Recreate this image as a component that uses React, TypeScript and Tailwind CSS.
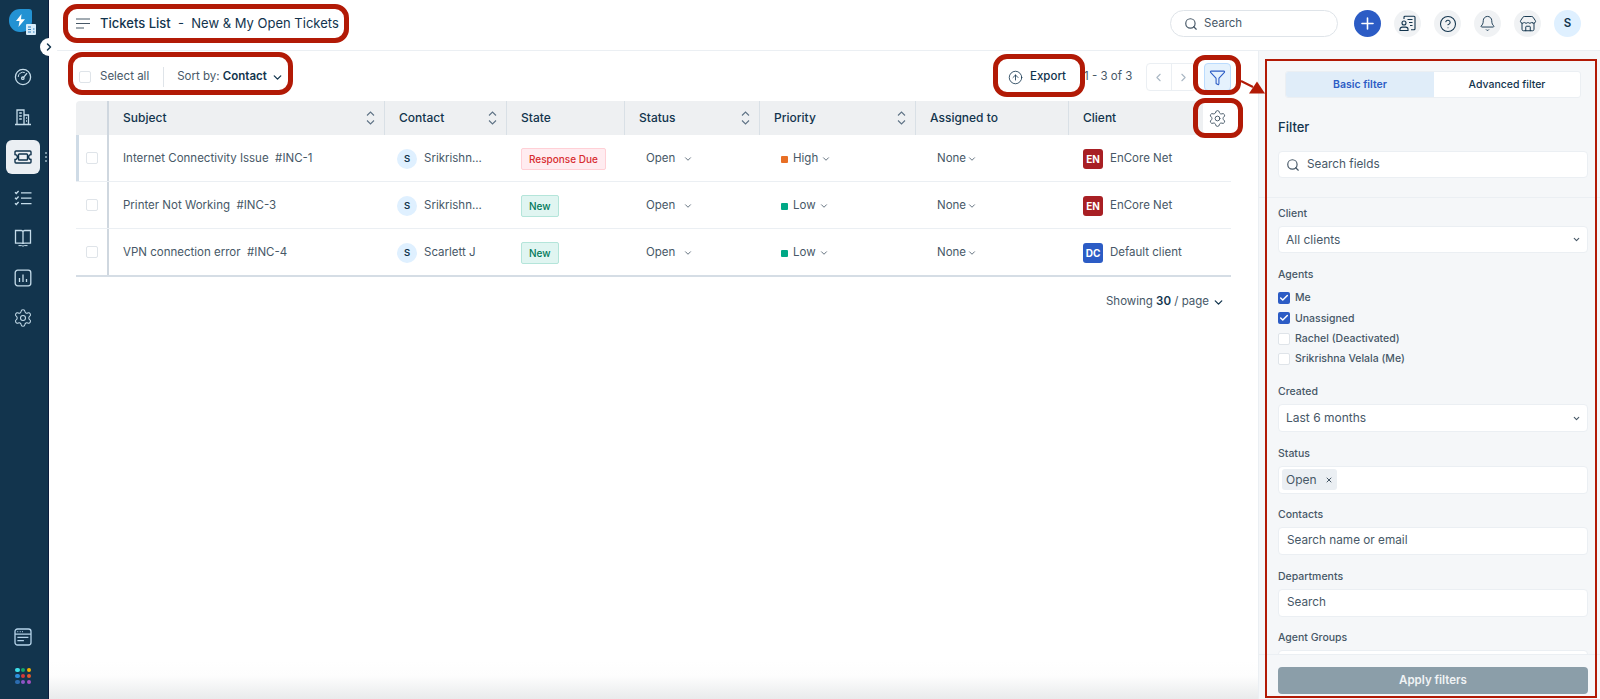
import React from "react";
import {
  Bell,
  Check,
  ChevronDown,
  ChevronLeft,
  ChevronRight,
  CircleArrowUp,
  CircleHelp,
  Funnel,
  Plus,
  Search,
  Settings,
  Store,
  X,
} from "lucide-react";

const gridCols = "grid grid-cols-[33px_276px_122px_118px_135px_156px_153px_162px]";

function GaugeIcon() {
  return (
    <svg width="18" height="18" viewBox="0 0 18 18" fill="none" stroke="currentColor" strokeWidth="1.3">
      <circle cx="9" cy="9" r="7.6" />
      <path d="M4.2 9a4.8 4.8 0 0 1 6.6-4.4" strokeWidth="1" />
      <path d="M9.4 9.6L13 5.2" />
      <circle cx="8.8" cy="10.2" r="1.2" />
    </svg>
  );
}

function BuildingIcon() {
  return (
    <svg width="18" height="18" viewBox="0 0 18 18" fill="none" stroke="currentColor" strokeWidth="1.3">
      <path d="M1 16.5h16M3 16.5V2h7v14.5M10 7h4.5v9.5M5.2 5h2.6M5.2 8h2.6M5.2 11h2.6M12 10h1M12 13h1" />
    </svg>
  );
}

function TicketIcon() {
  return (
    <svg width="18" height="14" viewBox="0 0 18 14" fill="none" stroke="#12344d" strokeWidth="1.4">
      <path d="M2 1h14a1 1 0 0 1 1 1v2.6a2.4 2.4 0 0 0 0 4.8V12a1 1 0 0 1-1 1H2a1 1 0 0 1-1-1V9.4a2.4 2.4 0 0 0 0-4.8V2a1 1 0 0 1 1-1z" />
      <rect x="4.5" y="4" width="9" height="6" rx="0.8" />
    </svg>
  );
}

function TasksIcon() {
  return (
    <svg width="18" height="16" viewBox="0 0 18 16" fill="none" stroke="currentColor" strokeWidth="1.3">
      <path d="M1 2.2l1.3 1.3L4.6 1M1 7.7l1.3 1.3 2.3-2.5M1 13.2l1.3 1.3 2.3-2.5" />
      <path d="M7 2.8h10.5M7 8.2h10.5M7 13.6h10.5" />
    </svg>
  );
}

function BookIcon() {
  return (
    <svg width="18" height="18" viewBox="0 0 18 18" fill="none" stroke="currentColor" strokeWidth="1.3">
      <path d="M9 3.2v11.3M9 3.2A1.7 1.7 0 0 0 7.3 1.5H1.5v12.6h5.8c.9 0 1.7.4 1.7 1 0-.6.8-1 1.7-1h5.8V1.5h-5.8A1.7 1.7 0 0 0 9 3.2z" />
      <path d="M4.5 16.6h3.2l1.3.6 1.3-.6h3.2" strokeWidth="1" />
    </svg>
  );
}

function ReportIcon() {
  return (
    <svg width="18" height="18" viewBox="0 0 18 18" fill="none" stroke="currentColor" strokeWidth="1.3">
      <rect x="1.2" y="1.2" width="15.6" height="15.6" rx="2.5" />
      <path d="M5.5 13V9M9 13V5.5M12.5 13v-3" />
    </svg>
  );
}

function ConsoleIcon() {
  return (
    <svg width="18" height="18" viewBox="0 0 18 18" fill="none" stroke="#b5d3ea" strokeWidth="1.3">
      <rect x="1" y="1" width="16" height="16" rx="2.5" />
      <path d="M1 6.2h16M3.4 3.6h.8M5.8 3.6h.8M8.2 3.6h.8M3.4 9.4h11M3.4 12.6h6.5" />
    </svg>
  );
}

function AppDots() {
  const colors = ["#3fe0ea", "#16a56b", "#f2b200", "#2f8fdc", "#d23a3a", "#e2572b", "#2c6cb0", "#8c55c5", "#a74fc0"];
  return (
    <div className="grid grid-cols-3 gap-[1.5px] w-[16px]">
      {colors.map((c) => (
        <span key={c} className="w-[4.5px] h-[4.5px] rounded-full" style={{ backgroundColor: c }} />
      ))}
    </div>
  );
}

function SortArrows() {
  return (
    <svg width="9" height="14" viewBox="0 0 9 14" fill="none" stroke="#5f7386" strokeWidth="1.1" className="shrink-0">
      <path d="M1 4.5L4.5 1 8 4.5M1 9.5L4.5 13 8 9.5" />
    </svg>
  );
}

function ContactCardIcon() {
  return (
    <svg width="17" height="17" viewBox="0 0 17 17" fill="none" stroke="#12344d" strokeWidth="1.1">
      <path d="M5 4V2.2a1 1 0 0 1 1-1h9a1 1 0 0 1 1 1v11.6a1 1 0 0 1-1 1h-3" />
      <path d="M8.5 4.5h5M10 7.5h3.5M11 10.5h2.5" />
      <circle cx="5" cy="8" r="2" />
      <path d="M1 15.5v-1.2a2.2 2.2 0 0 1 2.2-2.2h3.6a2.2 2.2 0 0 1 2.2 2.2v1.2z" />
    </svg>
  );
}

function HeaderCell({ label, sort, last }: { label: string; sort?: boolean; last?: boolean }) {
  return (
    <div className={`flex items-center justify-between pl-[14px] pr-[9px] h-full ${last ? "" : "border-r border-[#d9e0e6]"}`}>
      <span className="text-[12px] font-medium text-[#12344d]">{label}</span>
      {sort && <SortArrows />}
    </div>
  );
}

function Field({ label, children }: { label: string; children: React.ReactNode }) {
  return (
    <div className="flex flex-col">
      <div className="text-[10.5px] leading-[14px] font-medium text-[#475867] mb-[5px]">{label}</div>
      {children}
    </div>
  );
}

function InputBox({ children, h }: { children: React.ReactNode; h: string }) {
  return (
    <div className={`flex items-center justify-between bg-white border border-[#ebeff3] rounded-[4px] ${h}`}>
      {children}
    </div>
  );
}

function AgentCheck({ label, on }: { label: string; on?: boolean }) {
  return (
    <div className="flex items-center gap-[5px] h-[20.3px]">
      {on ? (
        <span className="w-[12px] h-[12px] rounded-[2px] bg-[#2c5cc5] flex items-center justify-center">
          <Check className="w-[10px] h-[10px] text-white" strokeWidth={3.5} />
        </span>
      ) : (
        <span className="w-[12px] h-[12px] rounded-[2px] bg-white border border-[#dfe4e9]" />
      )}
      <span className="text-[10.5px] font-medium text-[#475867]">{label}</span>
    </div>
  );
}

const rows = [
  { subject: "Internet Connectivity Issue", id: "#INC-1", contact: "Srikrishn...", state: "due", priority: "High", client: "EnCore Net", code: "EN" },
  { subject: "Printer Not Working", id: "#INC-3", contact: "Srikrishn...", state: "new", priority: "Low", client: "EnCore Net", code: "EN" },
  { subject: "VPN connection error", id: "#INC-4", contact: "Scarlett J", state: "new", priority: "Low", client: "Default client", code: "DC" },
];

function TicketRow({ row, first }: { row: (typeof rows)[number]; first: boolean }) {
  const small = "text-[11.5px] text-[#475867]";
  return (
    <div className={`${gridCols} h-[47px] items-center border-b border-[#ebeff3] [&>*:not(:first-child)]:pt-[2px]`}>
      <div className="relative h-full border-r-2 border-[#cfd7df] flex items-center pl-[10px]">
        {first && <span className="absolute left-0 top-0 bottom-0 w-[3px] bg-[#cfdbe6]" />}
        <span className="w-[12px] h-[12px] border border-[#dfe4e9] rounded-[2px] bg-white" />
      </div>
      <div className="pl-[14px] text-[11.5px] text-[#475867] whitespace-pre">
        {row.subject}
        {"  "}
        {row.id}
      </div>
      <div className="pl-[12px] flex items-center gap-[7px]">
        <span className="w-[20px] h-[20px] rounded-full bg-[#dff0ff] text-[9.5px] font-semibold text-[#12344d] flex items-center justify-center">S</span>
        <span className={small}>{row.contact}</span>
      </div>
      <div className="pl-[14px] flex items-center">
        {row.state === "due" ? (
          <span className="flex items-center h-[22px] px-[7px] rounded-[2px] bg-[#ffecf0] border border-[#ffd0d6] text-[10px] font-medium text-[#d72d30]">Response Due</span>
        ) : (
          <span className="flex items-center h-[22px] px-[7px] rounded-[2px] bg-[#e0f5f1] border border-[#b4e5da] text-[10px] font-medium text-[#00795b]">New</span>
        )}
      </div>
      <div className="pl-[21px] flex items-center gap-[8px]">
        <span className={small}>Open</span>
        <ChevronDown className="w-[10px] h-[10px] text-[#475867]" />
      </div>
      <div className="pl-[21px] flex items-center">
        <span className={`w-[7px] h-[7px] rounded-[1px] mr-[5px] ${row.priority === "High" ? "bg-[#e86f25]" : "bg-[#00a886]"}`} />
        <span className={small}>{row.priority}</span>
        <ChevronDown className="w-[10px] h-[10px] text-[#475867] ml-[3px]" />
      </div>
      <div className="pl-[21px] flex items-center gap-[1px]">
        <span className={small}>None</span>
        <ChevronDown className="w-[10px] h-[10px] text-[#475867]" />
      </div>
      <div className="pl-[14px] flex items-center gap-[7px]">
        <span className={`w-[20px] h-[20px] rounded-[3px] text-[10px] font-bold text-white flex items-center justify-center ${row.code === "EN" ? "bg-[#a81f24]" : "bg-[#2c5cc5]"}`}>{row.code}</span>
        <span className={small}>{row.client}</span>
      </div>
    </div>
  );
}

function Sidebar() {
  return (
    <aside className="w-[49px] shrink-0 bg-[#12344d] border-r border-[#0c1d3d] flex flex-col items-center pr-[2px] pb-[15px] text-[#c5dcea] relative z-10">
      <div className="relative mt-[9px] -ml-[5px] w-[23px] h-[23px] rounded-[11px] rounded-tr-[3px] bg-[#2392d3] flex items-center justify-center">
        <svg width="11" height="13" viewBox="0 0 11 13" fill="#ffffff">
          <path d="M6.5 0L1 7h3.5L3.5 13 10 5.2H6z" />
        </svg>
        <svg width="10" height="11" viewBox="0 0 10 11" className="absolute -right-[4px] -bottom-[3px]">
          <rect width="10" height="11" rx="1" fill="#d8ecfa" />
          <path d="M2 3h3M2 5.5h3M2 8h3M7 5h1.5M7 8h1.5" stroke="#2c7fbd" strokeWidth="1" />
        </svg>
      </div>
      <span className="absolute left-[40px] top-[38px] w-[18px] h-[18px] rounded-full bg-white flex items-center justify-center">
        <ChevronRight className="w-[12px] h-[12px] text-[#12344d]" strokeWidth={3} />
      </span>
      <div className="mt-[36px] flex flex-col items-center">
        <div className="h-[18px] flex items-center"><GaugeIcon /></div>
        <div className="h-[18px] mt-[22px] flex items-center"><BuildingIcon /></div>
        <div className="relative w-[34px] h-[34px] mt-[14px] rounded-[6px] bg-[#ebeff3] flex items-center justify-center">
          <TicketIcon />
          <span className="absolute -right-[7px] top-[12px] flex flex-col gap-[2px]">
            <span className="w-[2px] h-[2px] bg-[#9fb6c6] rounded-full" />
            <span className="w-[2px] h-[2px] bg-[#9fb6c6] rounded-full" />
            <span className="w-[2px] h-[2px] bg-[#9fb6c6] rounded-full" />
          </span>
        </div>
        <div className="h-[18px] mt-[15px] flex items-center"><TasksIcon /></div>
        <div className="h-[18px] mt-[22px] flex items-center"><BookIcon /></div>
        <div className="h-[18px] mt-[22px] flex items-center"><ReportIcon /></div>
        <div className="h-[18px] mt-[22px] flex items-center"><Settings className="w-[20px] h-[20px]" strokeWidth={1.25} /></div>
      </div>
      <div className="mt-auto flex flex-col items-center gap-[22px]">
        <ConsoleIcon />
        <AppDots />
      </div>
    </aside>
  );
}

function TopBar() {
  const iconBtn = "w-[27px] h-[27px] rounded-full bg-[#f0f2f4] flex items-center justify-center text-[#12344d]";
  return (
    <header className="h-[51px] shrink-0 border-b border-[#ebeff3] flex items-center pb-[3px] pl-[27px] pr-[19px]">
      <svg width="14" height="11" viewBox="0 0 14 11" fill="none" stroke="#475867" strokeWidth="1.1">
        <path d="M0 1h14M0 5.5h14M0 10h8" />
      </svg>
      <h1 className="ml-[10px] text-[13px] text-[#12344d] whitespace-pre">
        <span className="font-medium">Tickets List</span>
        {"  -  New & My Open Tickets"}
      </h1>
      <div className="ml-auto flex items-center gap-[6px] w-[168px] h-[27px] rounded-full border border-[#dfe4e9] pl-[13px]">
        <Search className="w-[14px] h-[14px] text-[#475867]" />
        <span className="text-[11.5px] text-[#475867]">Search</span>
      </div>
      <div className="ml-[16px] flex items-center gap-[13px]">
        <span className="w-[27px] h-[27px] rounded-full bg-[#2c5cc5] flex items-center justify-center">
          <Plus className="w-[19px] h-[19px] text-white" strokeWidth={2} />
        </span>
        <span className={iconBtn}><ContactCardIcon /></span>
        <span className={iconBtn}><CircleHelp className="w-[18px] h-[18px]" strokeWidth={1.4} /></span>
        <span className={iconBtn}><Bell className="w-[17px] h-[17px]" strokeWidth={1.3} /></span>
        <span className={iconBtn}><Store className="w-[18px] h-[18px]" strokeWidth={1.3} /></span>
        <span className="w-[27px] h-[27px] rounded-full bg-[#dff0ff] flex items-center justify-center text-[11.5px] font-semibold text-[#12344d]">S</span>
      </div>
    </header>
  );
}

function TicketTable() {
  return (
    <div className="flex-1 min-w-0 bg-[linear-gradient(to_bottom,#ffffff_0,#ffffff_610px,#fdfdfd_625px,#e9ebec_648px)] pl-[27px] pr-[27px]">
      <div className="h-[50px] pt-[2px] flex items-center w-[1155px]">
        <span className="ml-[3px] w-[12px] h-[12px] border border-[#dfe4e9] rounded-[2px]" />
        <span className="ml-[9px] text-[11.5px] text-[#475867]">Select all</span>
        <span className="ml-[14px] h-[20px] w-px bg-[#dfe4e9]" />
        <span className="ml-[13px] text-[11.5px] text-[#475867]">
          Sort by: <b className="font-semibold text-[#12344d]">Contact</b>
        </span>
        <ChevronDown className="ml-[4px] w-[13px] h-[13px] text-[#12344d]" strokeWidth={2.4} />
        <div className="ml-auto flex items-center h-[32px] w-[79px] pl-[9px] gap-[7px] bg-white">
          <CircleArrowUp className="w-[15px] h-[15px] text-[#12344d]" strokeWidth={1.3} />
          <span className="text-[11.5px] font-medium text-[#12344d]">Export</span>
        </div>
        <span className="ml-[6px] w-[56px] text-[11.5px] text-[#475867]">1 - 3 of 3</span>
        <div className="ml-[6px] flex h-[28px] w-[50px] border border-[#ebeff3] rounded-[4px]">
          <span className="flex-1 border-r border-[#ebeff3] flex items-center justify-center">
            <ChevronLeft className="w-[13px] h-[13px] text-[#a9b7c3]" />
          </span>
          <span className="flex-1 flex items-center justify-center">
            <ChevronRight className="w-[13px] h-[13px] text-[#a9b7c3]" />
          </span>
        </div>
        <span className="ml-[8px] w-[27px] h-[28px] rounded-[4px] bg-[#e5f2fd] border border-[#bbdcfe] flex items-center justify-center">
          <Funnel className="w-[17px] h-[17px] text-[#2c5cc5]" strokeWidth={1.5} />
        </span>
      </div>
      <div className="w-[1155px]">
        <div className={`${gridCols} h-[34px] bg-[#eef0f2] rounded-tl-[4px] relative`}>
          <div className="h-full border-r-2 border-[#cfd7df]" />
          <HeaderCell label="Subject" sort />
          <HeaderCell label="Contact" sort />
          <HeaderCell label="State" />
          <HeaderCell label="Status" sort />
          <HeaderCell label="Priority" sort />
          <HeaderCell label="Assigned to" />
          <HeaderCell label="Client" last />
          <span className="absolute right-0 top-0 w-[28px] h-full bg-white flex items-center justify-center">
            <Settings className="w-[19px] h-[19px] text-[#475867]" strokeWidth={1.2} />
          </span>
        </div>
        {rows.map((row, i) => (
          <TicketRow key={row.id} row={row} first={i === 0} />
        ))}
        <div className="h-[2px] -mt-px bg-[#d5dde5]" />
        <div className="flex items-center justify-end h-[20px] mt-[15px] pr-[6px] text-[11.5px] text-[#475867]">
          Showing&nbsp;<b className="font-semibold text-[#12344d]">30</b>&nbsp;/ page
          <ChevronDown className="ml-[3px] w-[13px] h-[13px] text-[#12344d]" strokeWidth={2.4} />
        </div>
      </div>
    </div>
  );
}

function FilterPanel() {
  const selectText = "pl-[7px] text-[12px] text-[#475867]";
  return (
    <aside className="w-[342px] shrink-0 bg-[#f5f7f9] border-l border-[#ebeff3] flex flex-col min-h-0">
      <div className="h-[147px] shrink-0 border-b border-[#ebeff3] pl-[19px] pr-[12px] pt-[20px]">
        <div className="ml-[7px] mr-[7px] flex h-[27px] rounded-[3px] border border-[#ebeff3] bg-white overflow-hidden">
          <div className="w-[148px] bg-[#e0edf9] flex items-center justify-center text-[10.5px] font-semibold text-[#2c5cc5]">Basic filter</div>
          <div className="flex-1 flex items-center justify-center text-[10.5px] font-medium text-[#12344d]">Advanced filter</div>
        </div>
        <div className="mt-[20px] text-[13px] leading-[18px] font-medium text-[#12344d]">Filter</div>
        <div className="mt-[15px] flex items-center gap-[7px] h-[27px] pl-[7px] bg-white border border-[#ebeff3] rounded-[4px]">
          <Search className="w-[14px] h-[14px] text-[#475867]" />
          <span className="text-[11.75px] text-[#475867]">Search fields</span>
        </div>
      </div>
      <div className="flex-1 min-h-0 overflow-hidden pl-[19px] pr-[12px] pt-[9px] flex flex-col">
        <Field label="Client">
          <InputBox h="h-[27px] shrink-0">
            <span className={selectText}>All clients</span>
            <ChevronDown className="w-[9px] h-[9px] mr-[6px] text-[#475867]" strokeWidth={3} />
          </InputBox>
        </Field>
        <div className="mt-[15px]">
          <div className="text-[10.5px] leading-[14px] font-medium text-[#475867] mb-[6px]">Agents</div>
          <AgentCheck label="Me" on />
          <AgentCheck label="Unassigned" on />
          <AgentCheck label="Rachel (Deactivated)" />
          <AgentCheck label="Srikrishna Velala (Me)" />
        </div>
        <div className="mt-[16px] flex flex-col gap-[14.5px]">
          <Field label="Created">
            <InputBox h="h-[28px]">
              <span className={selectText}>Last 6 months</span>
              <ChevronDown className="w-[9px] h-[9px] mr-[6px] text-[#475867]" strokeWidth={3} />
            </InputBox>
          </Field>
          <Field label="Status">
            <InputBox h="h-[28px]">
              <span className="ml-[3px] h-[21px] w-[55px] rounded-[3px] bg-[#ebeff3] flex items-center pl-[4px] gap-[8px] text-[12px] text-[#475867]">
                Open
                <X className="w-[8px] h-[8px]" strokeWidth={3} />
              </span>
            </InputBox>
          </Field>
          <Field label="Contacts">
            <InputBox h="h-[28px]">
              <span className="pl-[8px] text-[11.75px] text-[#475867]">Search name or email</span>
            </InputBox>
          </Field>
          <Field label="Departments">
            <InputBox h="h-[28px]">
              <span className="pl-[8px] text-[11.75px] text-[#475867]">Search</span>
            </InputBox>
          </Field>
          <Field label="Agent Groups">
            <InputBox h="h-[28px]">
              <span />
            </InputBox>
          </Field>
        </div>
      </div>
      <div className="h-[45px] shrink-0 border-t border-[#ebeff3] bg-[#f5f7f9] pl-[19px] pr-[12px] pt-[12px]">
        <div className="h-[27px] rounded-[4px] bg-[#8b9ea9] flex items-center justify-center text-[11.5px] font-semibold text-[#f0f3f5]">Apply filters</div>
      </div>
    </aside>
  );
}

// the red callouts drawn on top of the screenshot
function Callouts() {
  const ring = "absolute border-[5px] border-[#b21a06] pointer-events-none";
  return (
    <>
      <div className={`${ring} left-[63px] top-[4px] w-[286px] h-[39px] rounded-[14px]`} />
      <div className={`${ring} left-[68px] top-[52px] w-[225px] h-[43px] rounded-[14px]`} />
      <div className={`${ring} left-[993px] top-[54px] w-[92px] h-[43px] rounded-[14px]`} />
      <div className={`${ring} left-[1193px] top-[55px] w-[48px] h-[40px] rounded-[12px]`} />
      <div className={`${ring} left-[1193px] top-[98px] w-[50px] h-[40px] rounded-[12px]`} />
      <div className="absolute left-[1265px] top-[59px] w-[332px] h-[639px] border-[2px] border-[#b21a06] pointer-events-none" />
      <svg width="30" height="20" viewBox="0 0 30 20" className="absolute left-[1238px] top-[79px] pointer-events-none">
        <path d="M3 2L15 8" stroke="#b21a06" strokeWidth="2" />
        <path d="M27 14.5L11 14.5L19 2.5z" fill="#b21a06" />
      </svg>
    </>
  );
}

export default function App() {
  return (
    <div className="relative h-[699px] w-[1600px] flex overflow-hidden bg-white font-[Inter,sans-serif]">
      <Sidebar />
      <div className="flex-1 min-w-0 flex flex-col">
        <TopBar />
        <div className="flex-1 min-h-0 flex">
          <TicketTable />
          <FilterPanel />
        </div>
      </div>
      <Callouts />
    </div>
  );
}
